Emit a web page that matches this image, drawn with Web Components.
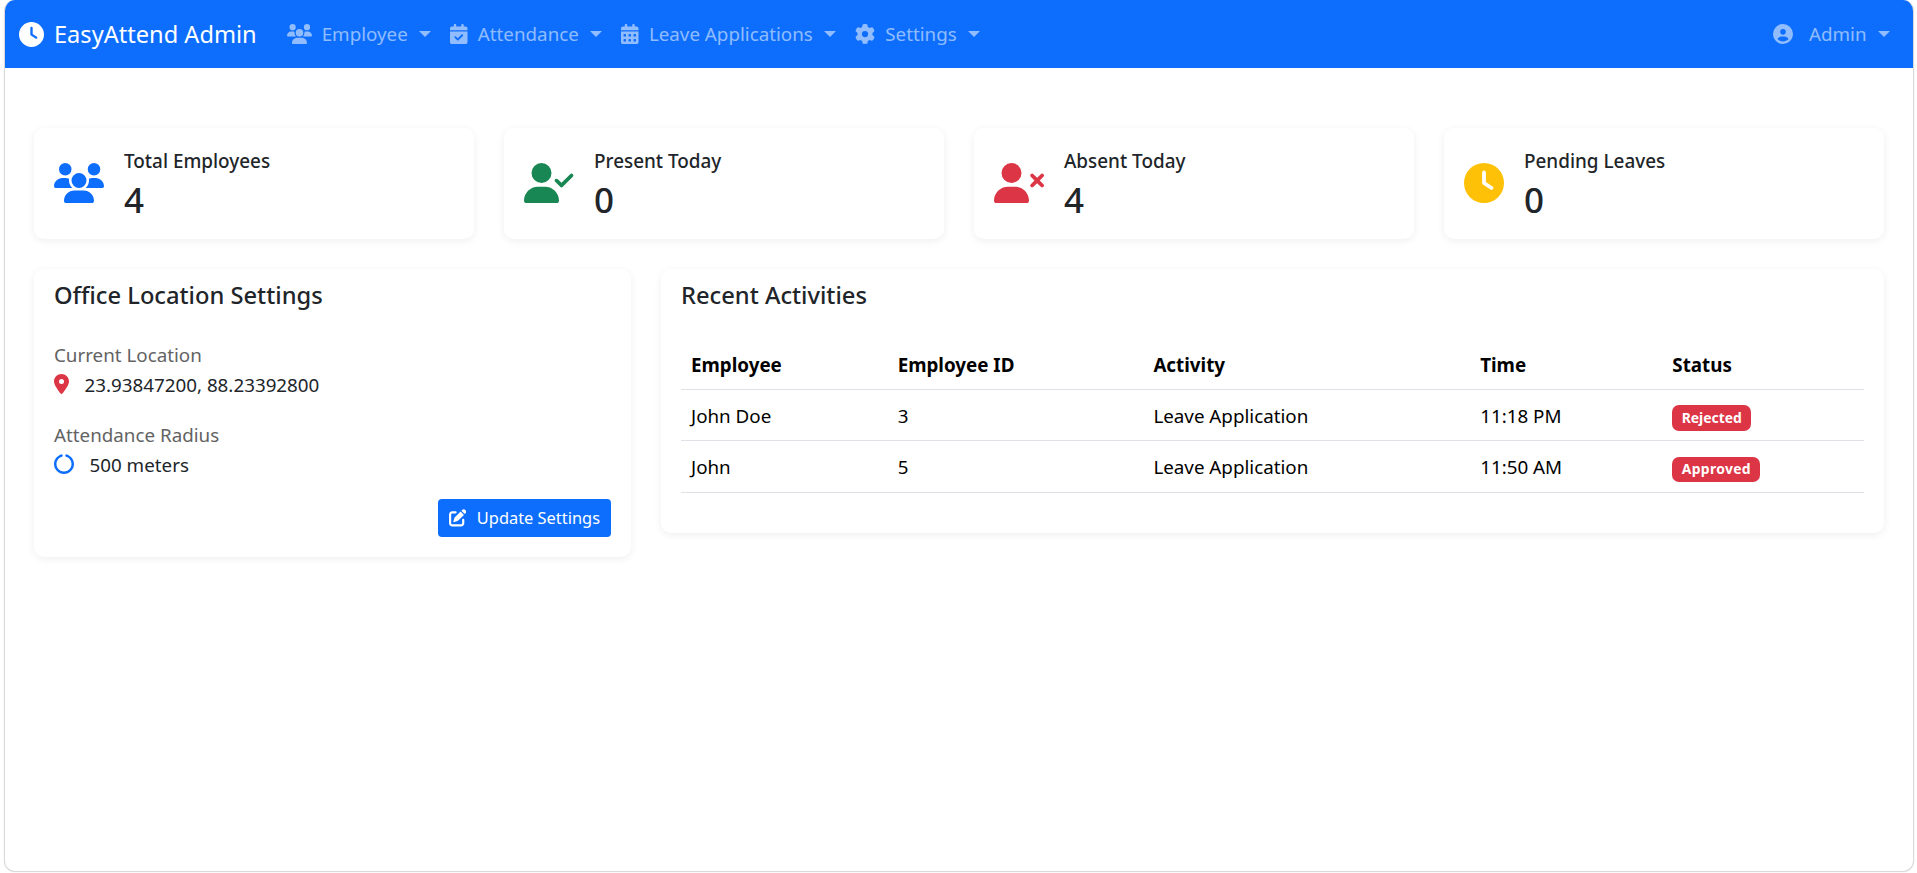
<!doctype html>
<html lang="en">
<head>
<meta charset="utf-8">
<title>EasyAttend Admin</title>
<style>
  html, body { height: 100%; }
  body {
    margin: 0;
    padding: 0 3px 1px 4px;
    box-sizing: border-box;
    background: #fff;
    color: #212529;
    font-family: "Noto Sans", "Open Sans", sans-serif;
    font-size: 18.8px;
    line-height: 30px;
  }
</style>
</head>
<body>
<app-shell>
  <top-bar slot="bar" brand="EasyAttend Admin">
    <nav-item icon="users" >Employee</nav-item>
    <nav-item icon="calendar-check">Attendance</nav-item>
    <nav-item icon="calendar-days">Leave Applications</nav-item>
    <nav-item icon="gear">Settings</nav-item>
    <nav-item slot="end" icon="circle-user" wide>Admin</nav-item>
  </top-bar>

  <stat-card icon="users" color="#0d6efd" size="40" value="4">Total Employees</stat-card>
  <stat-card icon="user-check" color="#198754" size="40" value="0">Present Today</stat-card>
  <stat-card icon="user-xmark" color="#dc3545" size="40" value="4">Absent Today</stat-card>
  <stat-card icon="clock" color="#ffc107" size="40" value="0">Pending Leaves</stat-card>

  <panel-card slot="left" heading="Office Location Settings">
    <info-block label="Current Location" icon="location-dot" color="#dc3545">23.93847200, 88.23392800</info-block>
    <info-block label="Attendance Radius" icon="circle-notch" color="#0d6efd">500 meters</info-block>
    <action-row>
      <app-button icon="pen-to-square">Update Settings</app-button>
    </action-row>
  </panel-card>

  <panel-card slot="right" heading="Recent Activities">
    <activity-table></activity-table>
  </panel-card>
</app-shell>

<script>
// Font Awesome style glyphs: [viewBox width, path]
const ICONS = {
  'clock': [512, 'M256 0a256 256 0 1 1 0 512A256 256 0 1 1 256 0zM232 120V256c0 8 4 15.5 10.7 20l96 64c11 7.4 25.9 4.4 33.3-6.7s4.4-25.9-6.7-33.3L280 243.2V120c0-13.3-10.7-24-24-24s-24 10.7-24 24z'],
  'users': [640, 'M144 0a80 80 0 1 1 0 160A80 80 0 1 1 144 0zM512 0a80 80 0 1 1 0 160A80 80 0 1 1 512 0zM0 298.7C0 239.8 47.8 192 106.7 192h42.7c15.9 0 31 3.5 44.6 9.7c-1.3 7.2-1.9 14.7-1.9 22.3c0 38.2 16.8 72.5 43.3 96c-.2 0-.4 0-.7 0H21.3C9.6 320 0 310.4 0 298.7zM405.3 320c-.2 0-.4 0-.7 0c26.6-23.5 43.3-57.8 43.3-96c0-7.6-.7-15-1.9-22.3c13.6-6.3 28.7-9.7 44.6-9.7h42.7C592.2 192 640 239.8 640 298.7c0 11.8-9.6 21.3-21.3 21.3H405.3zM224 224a96 96 0 1 1 192 0 96 96 0 1 1 -192 0zM128 485.3C128 411.7 187.7 352 261.3 352H378.7C452.3 352 512 411.7 512 485.3c0 14.7-11.9 26.7-26.7 26.7H154.7c-14.7 0-26.7-11.9-26.7-26.7z'],
  'user-check': [640, 'M96 128a128 128 0 1 1 256 0A128 128 0 1 1 96 128zM0 482.3C0 383.8 79.8 304 178.3 304h91.4C368.2 304 448 383.8 448 482.3c0 16.4-13.3 29.7-29.7 29.7H29.7C13.3 512 0 498.7 0 482.3zM625 177L497 305c-9.4 9.4-24.6 9.4-33.9 0l-64-64c-9.4-9.4-9.4-24.6 0-33.9s24.6-9.4 33.9 0l47 47L591 143c9.4-9.4 24.6-9.4 33.9 0s9.4 24.6 0 33.9z'],
  'user-xmark': [640, 'M96 128a128 128 0 1 1 256 0A128 128 0 1 1 96 128zM0 482.3C0 383.8 79.8 304 178.3 304h91.4C368.2 304 448 383.8 448 482.3c0 16.4-13.3 29.7-29.7 29.7H29.7C13.3 512 0 498.7 0 482.3zM471 143c9.4-9.4 24.6-9.4 33.9 0l47 47 47-47c9.4-9.4 24.6-9.4 33.9 0s9.4 24.6 0 33.9l-47 47 47 47c9.4 9.4 9.4 24.6 0 33.9s-24.6 9.4-33.9 0l-47-47-47 47c-9.4 9.4-24.6 9.4-33.9 0s-9.4-24.6 0-33.9l47-47-47-47c-9.4-9.4-9.4-24.6 0-33.9z'],
  'calendar-check': [448, 'M128 0c17.7 0 32 14.3 32 32V64H288V32c0-17.7 14.3-32 32-32s32 14.3 32 32V64h48c26.5 0 48 21.5 48 48v48H0V112C0 85.5 21.5 64 48 64H96V32c0-17.7 14.3-32 32-32zM0 192H448V464c0 26.5-21.5 48-48 48H48c-26.5 0-48-21.5-48-48V192zM329 305c9.4-9.4 9.4-24.6 0-33.9s-24.6-9.4-33.9 0l-95 95-47-47c-9.4-9.4-24.6-9.4-33.9 0s-9.4 24.6 0 33.9l64 64c9.4 9.4 24.6 9.4 33.9 0L329 305z'],
  'calendar-days': [448, 'M128 0c17.7 0 32 14.3 32 32V64H288V32c0-17.7 14.3-32 32-32s32 14.3 32 32V64h48c26.5 0 48 21.5 48 48v48H0V112C0 85.5 21.5 64 48 64H96V32c0-17.7 14.3-32 32-32zM0 192H448V464c0 26.5-21.5 48-48 48H48c-26.5 0-48-21.5-48-48V192zm64 80v32c0 8.8 7.2 16 16 16h32c8.8 0 16-7.2 16-16V272c0-8.8-7.2-16-16-16H80c-8.8 0-16 7.2-16 16zm128 0v32c0 8.8 7.2 16 16 16h32c8.8 0 16-7.2 16-16V272c0-8.8-7.2-16-16-16H208c-8.8 0-16 7.2-16 16zm144-16c-8.8 0-16 7.2-16 16v32c0 8.8 7.2 16 16 16h32c8.8 0 16-7.2 16-16V272c0-8.8-7.2-16-16-16H336zM64 400v32c0 8.8 7.2 16 16 16h32c8.8 0 16-7.2 16-16V400c0-8.8-7.2-16-16-16H80c-8.8 0-16 7.2-16 16zm144-16c-8.8 0-16 7.2-16 16v32c0 8.8 7.2 16 16 16h32c8.8 0 16-7.2 16-16V400c0-8.8-7.2-16-16-16H208zm112 16v32c0 8.8 7.2 16 16 16h32c8.8 0 16-7.2 16-16V400c0-8.8-7.2-16-16-16H336c-8.8 0-16 7.2-16 16z'],
  'gear': [512, 'M495.9 166.6c3.2 8.7 .5 18.4-6.4 24.6l-43.3 39.4c1.1 8.3 1.7 16.8 1.7 25.4s-.6 17.1-1.7 25.4l43.3 39.4c6.9 6.2 9.6 15.9 6.4 24.6c-4.4 11.9-9.7 23.3-15.8 34.3l-4.7 8.1c-6.6 11-14 21.4-22.1 31.2c-5.9 7.2-15.7 9.6-24.5 6.8l-55.7-17.7c-13.4 10.3-28.2 18.9-44 25.4l-12.5 57.1c-2 9.1-9 16.3-18.2 17.8c-13.8 2.3-28 3.5-42.5 3.5s-28.7-1.2-42.5-3.5c-9.2-1.5-16.2-8.7-18.2-17.8l-12.5-57.1c-15.8-6.5-30.6-15.1-44-25.4L83.1 425.9c-8.8 2.8-18.6 .3-24.5-6.8c-8.1-9.8-15.5-20.2-22.1-31.2l-4.7-8.1c-6.1-11-11.4-22.4-15.8-34.3c-3.2-8.7-.5-18.4 6.4-24.6l43.3-39.4C64.6 273.1 64 264.6 64 256s.6-17.1 1.7-25.4L22.4 191.2c-6.9-6.2-9.6-15.9-6.4-24.6c4.4-11.9 9.7-23.3 15.8-34.3l4.7-8.1c6.6-11 14-21.4 22.1-31.2c5.9-7.2 15.7-9.6 24.5-6.8l55.7 17.7c13.4-10.3 28.2-18.9 44-25.4l12.5-57.1c2-9.1 9-16.3 18.2-17.8C227.3 1.2 241.5 0 256 0s28.7 1.2 42.5 3.5c9.2 1.5 16.2 8.7 18.2 17.8l12.5 57.1c15.8 6.5 30.6 15.1 44 25.4l55.7-17.7c8.8-2.8 18.6-.3 24.5 6.8c8.1 9.8 15.5 20.2 22.1 31.2l4.7 8.1c6.1 11 11.4 22.4 15.8 34.3zM256 336a80 80 0 1 0 0-160 80 80 0 1 0 0 160z'],
  'circle-user': [512, 'M399 384.2C376.9 345.8 335.4 320 288 320H224c-47.4 0-88.9 25.8-111 64.2c35.2 39.2 86.2 63.8 143 63.8s107.8-24.7 143-63.8zM0 256a256 256 0 1 1 512 0A256 256 0 1 1 0 256zm256 16a72 72 0 1 0 0-144 72 72 0 1 0 0 144z'],
  'location-dot': [384, 'M215.7 499.2C267 435 384 279.4 384 192C384 86 298 0 192 0S0 86 0 192c0 87.4 117 243 168.3 307.2c12.3 15.3 35.1 15.3 47.4 0zM192 128a64 64 0 1 1 0 128 64 64 0 1 1 0-128z'],
  'circle-notch': [512, 'M222.7 32.1c5 16.9-4.6 34.8-21.5 39.8C121.8 95.6 64 169.1 64 256c0 106 86 192 192 192s192-86 192-192c0-86.9-57.8-160.4-137.1-184.1c-16.9-5-26.6-22.9-21.5-39.8s22.9-26.6 39.8-21.5C434.9 42.1 512 140 512 256c0 141.4-114.6 256-256 256S0 397.4 0 256C0 140 77.1 42.1 182.9 10.6c16.9-5 34.8 4.6 39.8 21.5z'],
  'pen-to-square': [512, 'M471.6 21.7c-21.9-21.9-57.3-21.9-79.2 0L362.3 51.7l97.9 97.9 30.1-30.1c21.9-21.9 21.9-57.3 0-79.2L471.6 21.7zm-299.2 220c-6.1 6.1-10.8 13.6-13.5 21.9l-29.6 88.8c-2.9 8.6-.6 18.1 5.8 24.6s15.9 8.7 24.6 5.8l88.8-29.6c8.2-2.7 15.7-7.4 21.9-13.5L437.7 172.3 339.7 74.3 172.4 241.7zM96 64C43 64 0 107 0 160V416c0 53 43 96 96 96H352c53 0 96-43 96-96V320c0-17.7-14.3-32-32-32s-32 14.3-32 32v96c0 17.7-14.3 32-32 32H96c-17.7 0-32-14.3-32-32V160c0-17.7 14.3-32 32-32h96c17.7 0 32-14.3 32-32s-14.3-32-32-32H96z']
};

// Small helper so every element gets an open shadow root with its markup
class BaseElement extends HTMLElement {
  constructor() {
    super();
    this.attachShadow({mode: 'open'});
  }
  render(html) {
    this.shadowRoot.innerHTML = html;
  }
}

class FaIcon extends BaseElement {
  connectedCallback() {
    const [w, d] = ICONS[this.getAttribute('name')];
    const h = Number(this.getAttribute('size') || 20);
    this.render(`
      <style>
        :host { display: inline-flex; flex: none; color: inherit; }
        svg { display: block; fill: currentColor; }
      </style>
      <svg viewBox="0 0 ${w} 512" width="${h * w / 512}" height="${h}" aria-hidden="true"><path d="${d}"/></svg>`);
  }
}
customElements.define('fa-icon', FaIcon);

class AppShell extends BaseElement {
  connectedCallback() {
    this.render(`
      <style>
        :host {
          display: flex;
          flex-direction: column;
          box-sizing: border-box;
          height: 100%;
          background: #fff;
          border: 1px solid #d9d9d9;
          border-top: 0;
          border-radius: 11px;
          overflow: hidden;
          box-shadow: 0 0 2px rgba(0, 0, 0, .08);
        }
        main { padding: 60px 29px 0 29px; }
        .stats {
          display: grid;
          grid-template-columns: repeat(4, 1fr);
          gap: 30px;
          margin-bottom: 30px;
        }
        .lower {
          display: grid;
          grid-template-columns: 597fr 1223fr;
          gap: 30px;
          align-items: start;
        }
      </style>
      <slot name="bar"></slot>
      <main>
        <div class="stats"><slot></slot></div>
        <div class="lower">
          <slot name="left"></slot>
          <slot name="right"></slot>
        </div>
      </main>`);
  }
}
customElements.define('app-shell', AppShell);

class TopBar extends BaseElement {
  connectedCallback() {
    this.render(`
      <style>
        :host {
          display: flex;
          flex: none;
          align-items: center;
          height: 68px;
          padding: 0 14px 0 14px;
          background: #0d6efd;
        }
        .brand {
          display: flex;
          align-items: center;
          gap: 10px;
          margin-right: 20px;
          color: #fff;
          font-size: 23.6px;
        }
        .links { display: flex; align-items: center; flex: 1; }
        .end { margin-left: auto; display: flex; }
      </style>
      <div class="brand"><fa-icon name="clock" size="25"></fa-icon><span>${this.getAttribute('brand')}</span></div>
      <div class="links"><slot></slot></div>
      <div class="end"><slot name="end"></slot></div>`);
  }
}
customElements.define('top-bar', TopBar);

class NavItem extends BaseElement {
  connectedCallback() {
    this.render(`
      <style>
        :host {
          display: flex;
          align-items: center;
          gap: 10px;
          padding: 0 9.5px 0 10px;
          color: rgba(255, 255, 255, .55);
        }
        :host([wide]) { gap: 16px; }
        .caret {
          width: 0;
          height: 0;
          margin-left: 1px;
          border-top: 6px solid currentColor;
          border-left: 6px solid transparent;
          border-right: 6px solid transparent;
        }
        :host([wide]) .caret { margin-left: -5px; }
      </style>
      <fa-icon name="${this.getAttribute('icon')}" size="20"></fa-icon>
      <span><slot></slot></span>
      <span class="caret"></span>`);
  }
}
customElements.define('nav-item', NavItem);

class StatCard extends BaseElement {
  connectedCallback() {
    this.render(`
      <style>
        :host {
          display: flex;
          align-items: center;
          gap: 20px;
          box-sizing: border-box;
          height: 111px;
          padding: 20px;
          background: #fff;
          border-radius: 10px;
          box-shadow: 0 2px 8px rgba(0, 0, 0, .065);
        }
        fa-icon { margin-bottom: 1px; }
        .text { padding-top: 2px; }
        .title { font-size: 18.9px; font-weight: 500; line-height: 24px; margin-bottom: 6px; }
        .value { font-size: 35px; font-weight: 500; line-height: 42px; }
      </style>
      <fa-icon name="${this.getAttribute('icon')}" size="${this.getAttribute('size')}" style="color:${this.getAttribute('color')}"></fa-icon>
      <div class="text">
        <div class="title"><slot></slot></div>
        <div class="value">${this.getAttribute('value')}</div>
      </div>`);
  }
}
customElements.define('stat-card', StatCard);

class PanelCard extends BaseElement {
  connectedCallback() {
    this.render(`
      <style>
        :host {
          display: block;
          background: #fff;
          border-radius: 10px;
          box-shadow: 0 2px 8px rgba(0, 0, 0, .065);
        }
        h5 {
          margin: 0;
          padding: 11px 20px 9px;
          font-size: 23.7px;
          font-weight: 500;
          line-height: 30px;
        }
        .body { padding: 20px; }
      </style>
      <h5>${this.getAttribute('heading')}</h5>
      <div class="body"><slot></slot></div>`);
  }
}
customElements.define('panel-card', PanelCard);

class InfoBlock extends BaseElement {
  connectedCallback() {
    this.render(`
      <style>
        :host { display: block; margin-bottom: 20px; }
        .label { color: #636363; padding-top: 1px; margin-bottom: -1px; }
        .value { display: flex; align-items: center; gap: 15.5px; }
        .value span { padding-top: 1px; margin-bottom: -1px; }
      </style>
      <div class="label">${this.getAttribute('label')}</div>
      <div class="value">
        <fa-icon name="${this.getAttribute('icon')}" size="20" style="color:${this.getAttribute('color')}"></fa-icon>
        <span><slot></slot></span>
      </div>`);
  }
}
customElements.define('info-block', InfoBlock);

class ActionRow extends BaseElement {
  connectedCallback() {
    this.render(`
      <style>:host { display: flex; justify-content: flex-end; }</style>
      <slot></slot>`);
  }
}
customElements.define('action-row', ActionRow);

class AppButton extends BaseElement {
  connectedCallback() {
    this.render(`
      <style>
        :host {
          display: inline-flex;
          align-items: center;
          gap: 10.5px;
          box-sizing: border-box;
          height: 38px;
          padding: 0 11px 0 10.5px;
          background: #0d6efd;
          color: #fff;
          border-radius: 4px;
          font-size: 16.4px;
        }
      </style>
      <fa-icon name="${this.getAttribute('icon')}" size="17.5"></fa-icon>
      <span><slot></slot></span>`);
  }
}
customElements.define('app-button', AppButton);

class StatusBadge extends BaseElement {
  connectedCallback() {
    this.render(`
      <style>
        :host {
          display: inline-flex;
          align-items: center;
          height: 25.5px;
          padding: 0 9.4px;
          background: #dc3545;
          color: #fff;
          border-radius: 7px;
          font-size: 13.9px;
          font-weight: 700;
          line-height: 1;
        }
        :host([status="Approved"]) { letter-spacing: .35px; }
      </style>
      <slot></slot>`);
  }
}
customElements.define('status-badge', StatusBadge);

class ActivityTable extends BaseElement {
  connectedCallback() {
    const rows = [
      ['John Doe', '3', 'Leave Application', '11:18 PM', 'Rejected'],
      ['John', '5', 'Leave Application', '11:50 AM', 'Approved']
    ];
    const head = ['Employee', 'Employee ID', 'Activity', 'Time', 'Status'];
    const widths = [206.5, 255.5, 326.5, 192, 201.5];
    this.render(`
      <style>
        :host { display: block; margin-bottom: 20px; }
        table { width: 100%; table-layout: fixed; border-collapse: collapse; color: #000; }
        th, td {
          box-sizing: border-box;
          height: 51.25px;
          padding: 11px 10px 9px;
          text-align: left;
          vertical-align: middle;
          border-bottom: 1px solid #dee2e6;
          line-height: 30px;
        }
        th { height: 50.25px; font-weight: 700; }
      </style>
      <table>
        <colgroup>${widths.map(w => `<col style="width:${w}px">`).join('')}</colgroup>
        <thead><tr>${head.map(h => `<th>${h}</th>`).join('')}</tr></thead>
        <tbody>
          ${rows.map(r => `<tr>
            <td>${r[0]}</td><td>${r[1]}</td><td>${r[2]}</td><td>${r[3]}</td>
            <td><status-badge status="${r[4]}">${r[4]}</status-badge></td>
          </tr>`).join('')}
        </tbody>
      </table>`);
  }
}
customElements.define('activity-table', ActivityTable);
</script>
</body>
</html>
